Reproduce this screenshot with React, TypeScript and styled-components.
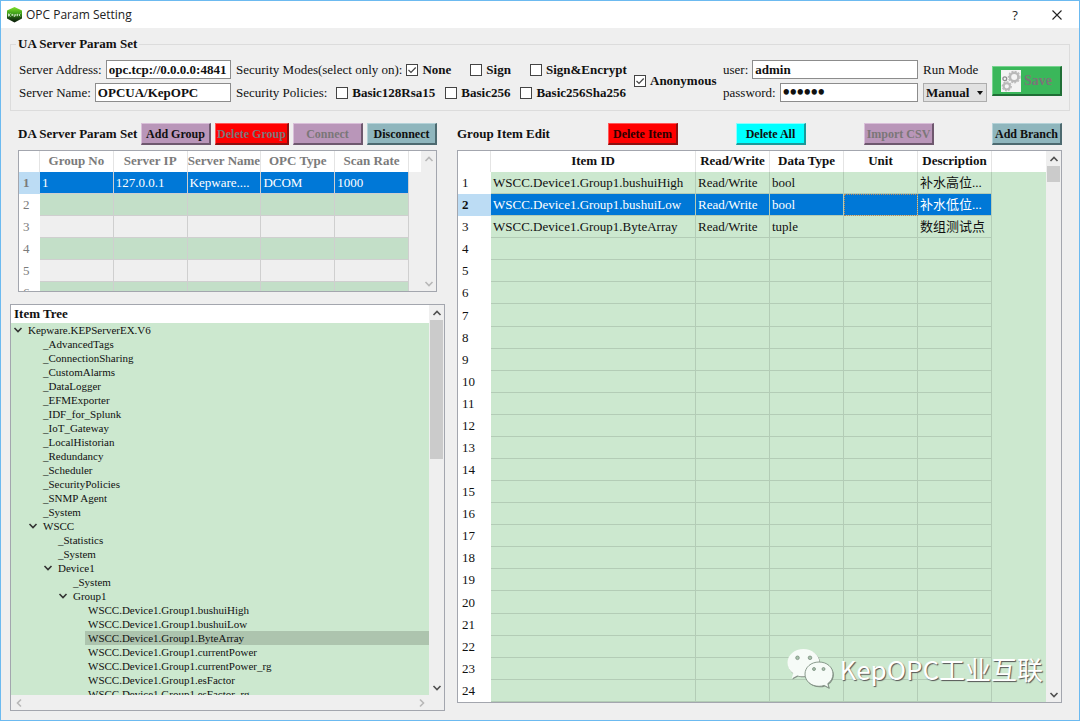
import React, { useState } from "react";
import styled, { createGlobalStyle } from "styled-components";

const serif = `"Liberation Serif", "Noto Sans CJK SC", serif`;

const GlobalStyle = createGlobalStyle`
  * { box-sizing: border-box; }
  body { margin: 0; background: #efefef; }
  button, input, select { font-family: ${serif}; }
`;

const Window = styled.div`
  display: flex;
  flex-direction: column;
  height: 100vh;
  border: 1px solid #6cbaf0;
  background: #efefef;
  color: #111;
  font: 13px/16px ${serif};
  position: relative;
  overflow: hidden;
`;

const TitleBar = styled.header`
  display: flex;
  align-items: center;
  height: 27px;
  flex: none;
  padding: 0 14px 0 6px;
  gap: 4px;
  background: #fff;
`;

const TitleText = styled.h1`
  margin: 0;
  flex: 1;
  font: 400 12px/16px "Open Sans", "Noto Sans", sans-serif;
  color: #222;
`;

const TitleButton = styled.button`
  display: grid;
  place-items: center;
  width: 16px;
  height: 16px;
  margin-left: 22px;
  padding: 0;
  border: 0;
  background: none;
  font: 13px/16px "Open Sans", sans-serif;
  color: #222;
`;

const ServerBox = styled.fieldset`
  flex: none;
  min-width: 0;
  margin: 8px 9px 0;
  padding: 8px 8px 8px;
  border: 1px solid #dcdcdc;
`;

const Legend = styled.legend`
  padding: 0 2px;
  margin-left: -3px;
  font-weight: 700;
`;

const ServerFields = styled.div`
  display: flex;
  align-items: center;
`;

const FieldColumn = styled.div<{ $grow?: number; $basis?: number; $left?: number }>`
  display: flex;
  flex-direction: column;
  gap: 4px;
  min-width: 0;
  flex: ${(p) => p.$grow ?? 0} 0 ${(p) => (p.$basis ? `${p.$basis}px` : "auto")};
  margin-left: ${(p) => p.$left ?? 0}px;
`;

const FieldRow = styled.div`
  display: flex;
  align-items: center;
  gap: 4px;
  height: 19px;
  white-space: nowrap;
`;

const TextInput = styled.input`
  flex: 1;
  min-width: 0;
  width: 0;
  height: 19px;
  padding: 0 2px;
  border: 1px solid #8c8c8c;
  background: #fff;
  font-size: 13px;
  font-weight: 700;
  color: #111;
  &[type="password"] { font-size: 20px; }
`;

const CheckGroup = styled.div<{ $gap: number }>`
  display: flex;
  gap: ${(p) => p.$gap}px;
  margin-left: auto;
`;

const CheckLabel = styled.label`
  display: flex;
  align-items: center;
  gap: 4px;
  font-weight: 700;
  white-space: nowrap;
`;

const CheckMark = styled.span`
  display: grid;
  width: 12px;
  height: 12px;
  & > * { grid-area: 1 / 1; pointer-events: none; }
`;

const CheckInput = styled.input`
  appearance: none;
  width: 12px;
  height: 12px;
  margin: 0;
  border: 1px solid #444;
  background: #fff;
  && { pointer-events: auto; }
`;

const SelectWrap = styled.span`
  display: grid;
  align-items: center;
  width: 64px;
  & > * { grid-area: 1 / 1; }
  svg { justify-self: end; margin-right: 4px; pointer-events: none; }
`;

const ModeSelect = styled.select`
  appearance: none;
  width: 64px;
  height: 19px;
  padding: 0 2px;
  border: 1px solid #adadad;
  border-radius: 0;
  background: #e1e1e1;
  font-size: 13px;
  font-weight: 700;
  color: #111;
`;

type Tone = "purple" | "red" | "teal" | "cyan" | "green";
const tones: Record<Tone, [string, string, string]> = {
  purple: ["#b996b9", "#d9bfd9", "#6e586e"],
  red: ["#ff0000", "#ff5a5a", "#8c1010"],
  teal: ["#8fb6bd", "#b4d2d8", "#4d6a70"],
  cyan: ["#00ffff", "#8affff", "#1c9a9a"],
  green: ["#3ab75a", "#76d48e", "#1f6e35"],
};

const ToolButton = styled.button<{ $tone: Tone; $width?: number }>`
  flex: none;
  width: ${(p) => p.$width ?? 70}px;
  height: 22px;
  padding: 0;
  border-style: solid;
  border-width: 1px 2px 2px 1px;
  border-color: ${(p) => {
    const [, light, dark] = tones[p.$tone];
    return `${light} ${dark} ${dark} ${light}`;
  }};
  background: ${(p) => tones[p.$tone][0]};
  font-size: 12px;
  line-height: 16px;
  font-weight: 700;
  color: ${(p) => (p.$tone === "red" ? "#2a0000" : "#101010")};
  white-space: nowrap;
  &:disabled { color: #7b7678; }
`;

const SaveButton = styled(ToolButton)`
  display: flex;
  align-items: center;
  justify-content: center;
  gap: 3px;
  height: 30px;
  margin-left: 5px;
  font-size: 14px;
  &:disabled { color: #7b7678; }
`;

const Body = styled.main`
  flex: 1;
  min-height: 0;
  display: grid;
  grid-template-columns: 435fr 605fr;
  gap: 12px;
  padding: 12px 17px 0 9px;
`;

const LeftPane = styled.div`
  display: flex;
  flex-direction: column;
  min-width: 0;
  min-height: 0;
  padding-bottom: 9px;
`;

const RightPane = styled.section`
  display: flex;
  flex-direction: column;
  min-width: 0;
  min-height: 0;
  padding-bottom: 17px;
`;

const GroupSection = styled.section`
  flex: none;
  padding: 0 8px;
  margin-bottom: 12px;
`;

const SectionBar = styled.div`
  display: flex;
  align-items: center;
  justify-content: space-between;
  height: 22px;
  margin-bottom: 5px;
`;

const SectionTitle = styled.h2`
  margin: 0;
  font-size: 13px;
  line-height: 16px;
  font-weight: 700;
  white-space: nowrap;
`;

const ButtonRow = styled.div`
  display: flex;
  gap: 4px;
`;

const Panel = styled.div<{ $height?: number }>`
  display: flex;
  ${(p) => (p.$height ? `height: ${p.$height}px;` : "flex: 1; min-height: 0;")}
  border: 1px solid #a3a6ae;
  overflow: hidden;
`;

const TableArea = styled.div`
  flex: 1;
  min-width: 0;
  overflow: hidden;
`;

const DataTable = styled.table<{ $tone: "group" | "item" }>`
  width: 100%;
  ${(p) => (p.$tone === "item" ? "height: 100%;" : "")}
  table-layout: fixed;
  border-collapse: separate;
  border-spacing: 0;
  background: ${(p) => (p.$tone === "item" ? "#cce8cf" : "#efefef")};
  --line: ${(p) => (p.$tone === "item" ? "#b3ccb6" : "#cfcfcf")};
  --head: ${(p) => (p.$tone === "item" ? "#111" : "#7b7b7b")};
`;

const HeadCell = styled.th`
  height: 21px;
  padding: 0 0 1px;
  border-right: 1px solid #e4e4e4;
  background: #fff;
  color: var(--head);
  font-weight: 700;
  white-space: nowrap;
  overflow: hidden;
  &:last-child { border-right: 0; }
`;

const RowHead = styled.th<{ $active?: boolean }>`
  height: 22px;
  padding: 0 0 0 4px;
  text-align: left;
  font-weight: ${(p) => (p.$active ? 700 : 400)};
  color: var(--head);
  background: ${(p) => (p.$active ? "#bcdcf4" : "#fff")};
`;

const Cell = styled.td<{ $active?: boolean; $fill?: string; $focus?: boolean }>`
  height: 22px;
  padding: 0 2px;
  border-right: 1px solid var(--line);
  border-bottom: 1px solid var(--line);
  background: ${(p) => (p.$active ? "#0078d7" : p.$fill ?? "transparent")};
  color: ${(p) => (p.$active ? "#fff" : "inherit")};
  outline: ${(p) => (p.$focus ? "1px dotted #b98a5a" : "none")};
  outline-offset: -1px;
  white-space: nowrap;
  overflow: hidden;
  text-overflow: ellipsis;
`;

const EndCell = styled.td`
  padding: 0;
`;

const ScrollColumn = styled.div`
  flex: none;
  display: flex;
  flex-direction: column;
  align-items: center;
  width: 15px;
  background: #efefef;
`;

const ScrollRow = styled.div`
  flex: none;
  display: flex;
  justify-content: space-between;
  align-items: center;
  height: 15px;
  background: #efefef;
`;

const ScrollButton = styled.button`
  flex: none;
  display: grid;
  place-items: center;
  width: 15px;
  height: 15px;
  padding: 0;
  border: 0;
  background: none;
`;

const ScrollTrack = styled.div`
  flex: 1;
  width: 13px;
`;

const ScrollThumb = styled.div<{ $height: number }>`
  height: ${(p) => p.$height}px;
  background: #cbcbcb;
`;

const TreeArea = styled.div`
  flex: 1;
  min-width: 0;
  display: flex;
  flex-direction: column;
`;

const TreeTitle = styled.h2`
  flex: none;
  margin: 0;
  padding: 1px 3px;
  background: #fff;
  font-size: 13px;
  line-height: 16px;
  font-weight: 700;
`;

const TreeList = styled.ul`
  flex: 1;
  min-height: 0;
  margin: 0;
  padding: 0;
  list-style: none;
  overflow: hidden;
  background: #cce8cf;
  font-size: 11px;
  line-height: 14px;
`;

const TreeItem = styled.li<{ $level: number }>`
  display: flex;
  height: 14px;
  padding-left: ${(p) => p.$level * 15}px;
`;

const TreeToggle = styled.span`
  display: grid;
  place-items: center;
  width: 14px;
`;

const TreeLabel = styled.span<{ $active?: boolean }>`
  flex: 1;
  padding-left: 3px;
  white-space: nowrap;
  background: ${(p) => (p.$active ? "#adc4ae" : "transparent")};
`;

const TreeScrollFrame = styled.div`
  flex: none;
  display: flex;
  padding-bottom: 15px;
`;

const Watermark = styled.div`
  position: absolute;
  right: 36px;
  bottom: 30px;
  display: flex;
  align-items: center;
  gap: 6px;
  color: #fff;
  font: 400 26px/40px "Noto Sans CJK SC", sans-serif;
  text-shadow: 1px 1px 1px #555;
  white-space: nowrap;
  pointer-events: none;
`;

type Direction = "up" | "down" | "left" | "right";
const chevrons: Record<Direction, string> = {
  up: "M1.5 7 L5 3.5 L8.5 7",
  down: "M1.5 3 L5 6.5 L8.5 3",
  left: "M7 1.5 L3.5 5 L7 8.5",
  right: "M3 1.5 L6.5 5 L3 8.5",
};

function Chevron({ dir, color = "#505050" }: { dir: Direction; color?: string }) {
  return (
    <svg width="10" height="10" viewBox="0 0 10 10" fill="none" stroke={color} strokeWidth="1.6">
      <path d={chevrons[dir]} />
    </svg>
  );
}

function Scrollbar({ thumb, disabled }: { thumb?: number; disabled?: boolean }) {
  const color = disabled ? "#b8b8b8" : "#505050";
  return (
    <ScrollColumn>
      <ScrollButton aria-label="Scroll up" disabled={disabled}><Chevron dir="up" color={color} /></ScrollButton>
      <ScrollTrack>{thumb ? <ScrollThumb $height={thumb} /> : null}</ScrollTrack>
      <ScrollButton aria-label="Scroll down" disabled={disabled}><Chevron dir="down" color={color} /></ScrollButton>
    </ScrollColumn>
  );
}

function Check({ label, initial = false }: { label: string; initial?: boolean }) {
  const [on, setOn] = useState(initial);
  return (
    <CheckLabel>
      <CheckMark>
        <CheckInput type="checkbox" checked={on} onChange={() => setOn(!on)} />
        {on && (
          <svg width="12" height="12" viewBox="0 0 12 12" fill="none" stroke="#444" strokeWidth="1.2">
            <path d="M2.5 6 L5 8.5 L9.7 3.5" />
          </svg>
        )}
      </CheckMark>
      {label}
    </CheckLabel>
  );
}

function AppLogo() {
  return (
    <svg width="15" height="16" viewBox="0 0 15 16">
      <defs>
        <linearGradient id="logoFill" x1="0" y1="0" x2="0" y2="1">
          <stop offset="0" stopColor="#7fe02a" />
          <stop offset="0.45" stopColor="#3a9a18" />
          <stop offset="0.7" stopColor="#1c4a12" />
          <stop offset="1" stopColor="#0a1c08" />
        </linearGradient>
      </defs>
      <path d="M7.5 0 L15 3.5 V11.5 L7.5 15.5 L0 11.5 V3.5 Z" fill="url(#logoFill)" />
      <path d="M1.5 6.5 V9.5 M3.5 6.5 L1.8 8 L3.5 9.5 M4.500 8.300 H6.200 M4.500 7.400 H6.200 M7.300 7.400 V10 M8.800 7 V9.200 M10.400 6.800 V9.200 M13.300 6.600 L11.900 8 L13.300 9.200" stroke="#eef8ea" strokeWidth="0.8" fill="none" />
    </svg>
  );
}

function Gear({ cx, cy, r, w }: { cx: number; cy: number; r: number; w: number }) {
  return (
    <g stroke="#b9b9b9" fill="none">
      <circle cx={cx} cy={cy} r={r} strokeWidth={w} />
      <circle cx={cx} cy={cy} r={r + w / 2 + 0.4} strokeWidth="1.2" strokeDasharray="2 1.4" />
    </g>
  );
}

function GearsIcon() {
  return (
    <svg width="20" height="22" viewBox="0 0 20 22">
      <rect width="20" height="22" fill="#f4f4f4" />
      <Gear cx={13.2} cy={7} r={4.2} w={2.4} />
      <Gear cx={5.8} cy={16.3} r={3.1} w={2} />
      <circle cx="3.8" cy="8.8" r="1.9" fill="none" stroke="#8e8e8e" strokeWidth="1.3" />
    </svg>
  );
}

function ChatLogo() {
  return (
    <svg width="47" height="42" viewBox="0 0 47 42">
      <g fill="#555" opacity="0.6" transform="translate(0.8 1)">
        <path d="M16.5 1 C7.5 1 .5 7 .5 14.7 C.5 19 2.7 22.7 6.2 25.2 L4.7 30.5 L10.3 27.4 C12.3 28 14.4 28.3 16.5 28.3 C25 28.3 32.5 22.5 32.5 14.7 C32.5 7 25 1 16.5 1 Z" />
        <path d="M32 14 C24 14 18 19.3 18 26 C18 33 24 38.3 32 38.3 C33.8 38.3 35.6 38 37.2 37.4 L42 40 L40.8 35.6 C44.2 33.3 46 29.8 46 26 C46 19.3 40 14 32 14 Z" />
      </g>
      <path fill="#f6fbf7" d="M16.5 1 C7.5 1 .5 7 .5 14.7 C.5 19 2.7 22.7 6.2 25.2 L4.7 30.5 L10.3 27.4 C12.3 28 14.4 28.3 16.5 28.3 C25 28.3 32.5 22.5 32.5 14.7 C32.5 7 25 1 16.5 1 Z" />
      <path fill="#f6fbf7" stroke="#7d8f80" strokeWidth="0.9" d="M32 14 C24 14 18 19.3 18 26 C18 33 24 38.3 32 38.3 C33.8 38.3 35.6 38 37.2 37.4 L42 40 L40.8 35.6 C44.2 33.3 46 29.8 46 26 C46 19.3 40 14 32 14 Z" />
      <g fill="#a9c2ad" stroke="#6f8273" strokeWidth="0.7">
        <circle cx="10.5" cy="9.8" r="1.8" />
        <circle cx="23" cy="9.8" r="1.8" />
        <circle cx="27" cy="21" r="1.5" />
        <circle cx="36.5" cy="21" r="1.5" />
      </g>
    </svg>
  );
}

const groupHeads = ["Group No", "Server IP", "Server Name", "OPC Type", "Scan Rate"];
const groupRow = ["1", "127.0.0.1", "Kepware....", "DCOM", "1000"];

const itemHeads = ["Read/Write", "Data Type", "Unit", "Description"];
const items = [
  ["WSCC.Device1.Group1.bushuiHigh", "Read/Write", "bool", "", "补水高位..."],
  ["WSCC.Device1.Group1.bushuiLow", "Read/Write", "bool", "", "补水低位..."],
  ["WSCC.Device1.Group1.ByteArray", "Read/Write", "tuple", "", "数组测试点"],
];
const blank = ["", "", "", "", ""];

const tree: { label: string; level: number; open?: boolean }[] = [
  { label: "Kepware.KEPServerEX.V6", level: 0, open: true },
  ...["_AdvancedTags", "_ConnectionSharing", "_CustomAlarms", "_DataLogger", "_EFMExporter", "_IDF_for_Splunk",
    "_IoT_Gateway", "_LocalHistorian", "_Redundancy", "_Scheduler", "_SecurityPolicies", "_SNMP Agent", "_System",
  ].map((label) => ({ label, level: 1 })),
  { label: "WSCC", level: 1, open: true },
  { label: "_Statistics", level: 2 },
  { label: "_System", level: 2 },
  { label: "Device1", level: 2, open: true },
  { label: "_System", level: 3 },
  { label: "Group1", level: 3, open: true },
  ...["bushuiHigh", "bushuiLow", "ByteArray", "currentPower", "currentPower_rg", "esFactor", "esFactor_rg"].map(
    (tag) => ({ label: `WSCC.Device1.Group1.${tag}`, level: 4 })
  ),
];

export default function App() {
  const [selectedNode, setSelectedNode] = useState(22);
  return (
    <>
      <GlobalStyle />
      <Window>
        <TitleBar>
          <AppLogo />
          <TitleText>OPC Param Setting</TitleText>
          <TitleButton aria-label="Help">?</TitleButton>
          <TitleButton aria-label="Close">
            <svg width="10" height="10" viewBox="0 0 10 10" stroke="#222" strokeWidth="1.1">
              <path d="M0.5 0.5 L9.5 9.5 M9.5 0.5 L0.5 9.5" />
            </svg>
          </TitleButton>
        </TitleBar>

        <ServerBox>
          <Legend>UA Server Param Set</Legend>
          <ServerFields>
            <FieldColumn $grow={1} $basis={212}>
              <FieldRow>
                <label htmlFor="address">Server Address:</label>
                <TextInput id="address" defaultValue="opc.tcp://0.0.0.0:4841" />
              </FieldRow>
              <FieldRow>
                <label htmlFor="name">Server Name:</label>
                <TextInput id="name" defaultValue="OPCUA/KepOPC" />
              </FieldRow>
            </FieldColumn>
            <FieldColumn $basis={390} $left={5}>
              <FieldRow>
                <span>Security Modes(select only on):</span>
                <CheckGroup $gap={19}>
                  <Check label="None" initial />
                  <Check label="Sign" />
                  <Check label="Sign&amp;Encrypt" />
                </CheckGroup>
              </FieldRow>
              <FieldRow>
                <span>Security Policies:</span>
                <CheckGroup $gap={10}>
                  <Check label="Basic128Rsa15" />
                  <Check label="Basic256" />
                  <Check label="Basic256Sha256" />
                </CheckGroup>
              </FieldRow>
            </FieldColumn>
            <FieldColumn $basis={80} $left={8}>
              <Check label="Anonymous" initial />
            </FieldColumn>
            <FieldColumn $grow={1} $basis={195} $left={9}>
              <FieldRow>
                <label htmlFor="user">user:</label>
                <TextInput id="user" defaultValue="admin" />
              </FieldRow>
              <FieldRow>
                <label htmlFor="password">password:</label>
                <TextInput id="password" type="password" defaultValue="secret" />
              </FieldRow>
            </FieldColumn>
            <FieldColumn $basis={64} $left={5}>
              <FieldRow>
                <label htmlFor="mode">Run Mode</label>
              </FieldRow>
              <FieldRow>
                <SelectWrap>
                  <ModeSelect id="mode" defaultValue="Manual">
                    <option>Manual</option>
                    <option>Auto</option>
                  </ModeSelect>
                  <svg width="6" height="4" viewBox="0 0 6 4"><path d="M0 0 H6 L3 4 Z" fill="#111" /></svg>
                </SelectWrap>
              </FieldRow>
            </FieldColumn>
            <SaveButton $tone="green" disabled>
              <GearsIcon />
              Save
            </SaveButton>
          </ServerFields>
        </ServerBox>

        <Body>
          <LeftPane>
            <GroupSection>
              <SectionBar>
                <SectionTitle>DA Server Param Set</SectionTitle>
                <ButtonRow>
                  <ToolButton $tone="purple">Add Group</ToolButton>
                  <ToolButton $tone="red" $width={74} disabled>Delete Group</ToolButton>
                  <ToolButton $tone="purple" disabled>Connect</ToolButton>
                  <ToolButton $tone="teal">Disconnect</ToolButton>
                </ButtonRow>
              </SectionBar>
              <Panel $height={142}>
                <TableArea>
                  <DataTable $tone="group">
                    <colgroup>
                      <col width="21" />
                      {groupHeads.map((h) => <col key={h} />)}
                      <col width="12" />
                    </colgroup>
                    <thead>
                      <tr>
                        <HeadCell />
                        {groupHeads.map((h) => <HeadCell key={h} scope="col">{h}</HeadCell>)}
                        <HeadCell />
                      </tr>
                    </thead>
                    <tbody>
                      {[1, 2, 3, 4, 5, 6].map((n) => (
                        <tr key={n}>
                          <RowHead scope="row" $active={n === 1}>{n}</RowHead>
                          {(n === 1 ? groupRow : blank).map((text, i) => (
                            <Cell key={i} $active={n === 1} $fill={n % 2 === 0 ? "#c3dfc8" : undefined}>{text}</Cell>
                          ))}
                          <EndCell />
                        </tr>
                      ))}
                    </tbody>
                  </DataTable>
                </TableArea>
                <Scrollbar disabled />
              </Panel>
            </GroupSection>

            <Panel>
              <TreeArea>
                <TreeTitle>Item Tree</TreeTitle>
                <TreeList>
                  {tree.map((node, i) => (
                    <TreeItem key={i} $level={node.level} onClick={() => setSelectedNode(i)}>
                      <TreeToggle>{node.open && <Chevron dir="down" color="#333" />}</TreeToggle>
                      <TreeLabel $active={i === selectedNode}>{node.label}</TreeLabel>
                    </TreeItem>
                  ))}
                </TreeList>
                <ScrollRow>
                  <ScrollButton aria-label="Scroll left" disabled><Chevron dir="left" color="#b8b8b8" /></ScrollButton>
                  <ScrollButton aria-label="Scroll right" disabled><Chevron dir="right" color="#b8b8b8" /></ScrollButton>
                </ScrollRow>
              </TreeArea>
              <TreeScrollFrame>
                <Scrollbar thumb={139} />
              </TreeScrollFrame>
            </Panel>
          </LeftPane>

          <RightPane>
            <SectionBar>
              <SectionTitle>Group Item Edit</SectionTitle>
              <ToolButton $tone="red">Delete Item</ToolButton>
              <ToolButton $tone="cyan">Delete All</ToolButton>
              <ToolButton $tone="purple" disabled>Import CSV</ToolButton>
              <ToolButton $tone="teal">Add Branch</ToolButton>
            </SectionBar>
            <Panel>
              <TableArea>
                <DataTable $tone="item">
                  <colgroup>
                    <col width="33" />
                    <col />
                    {itemHeads.map((h) => <col key={h} width="74" />)}
                    <col width="54" />
                  </colgroup>
                  <thead>
                    <tr>
                      <HeadCell />
                      <HeadCell scope="col">Item ID</HeadCell>
                      {itemHeads.map((h) => <HeadCell key={h} scope="col">{h}</HeadCell>)}
                      <HeadCell />
                    </tr>
                  </thead>
                  <tbody>
                    {Array.from({ length: 24 }, (_, r) => (
                      <tr key={r}>
                        <RowHead scope="row" $active={r === 1}>{r + 1}</RowHead>
                        {(items[r] ?? blank).map((text, i) => (
                          <Cell key={i} $active={r === 1} $focus={r === 1 && i === 3}>{text}</Cell>
                        ))}
                        <EndCell />
                      </tr>
                    ))}
                  </tbody>
                </DataTable>
              </TableArea>
              <Scrollbar thumb={16} />
            </Panel>
          </RightPane>
        </Body>

        <Watermark>
          <ChatLogo />
          KepOPC工业互联
        </Watermark>
      </Window>
    </>
  );
}
